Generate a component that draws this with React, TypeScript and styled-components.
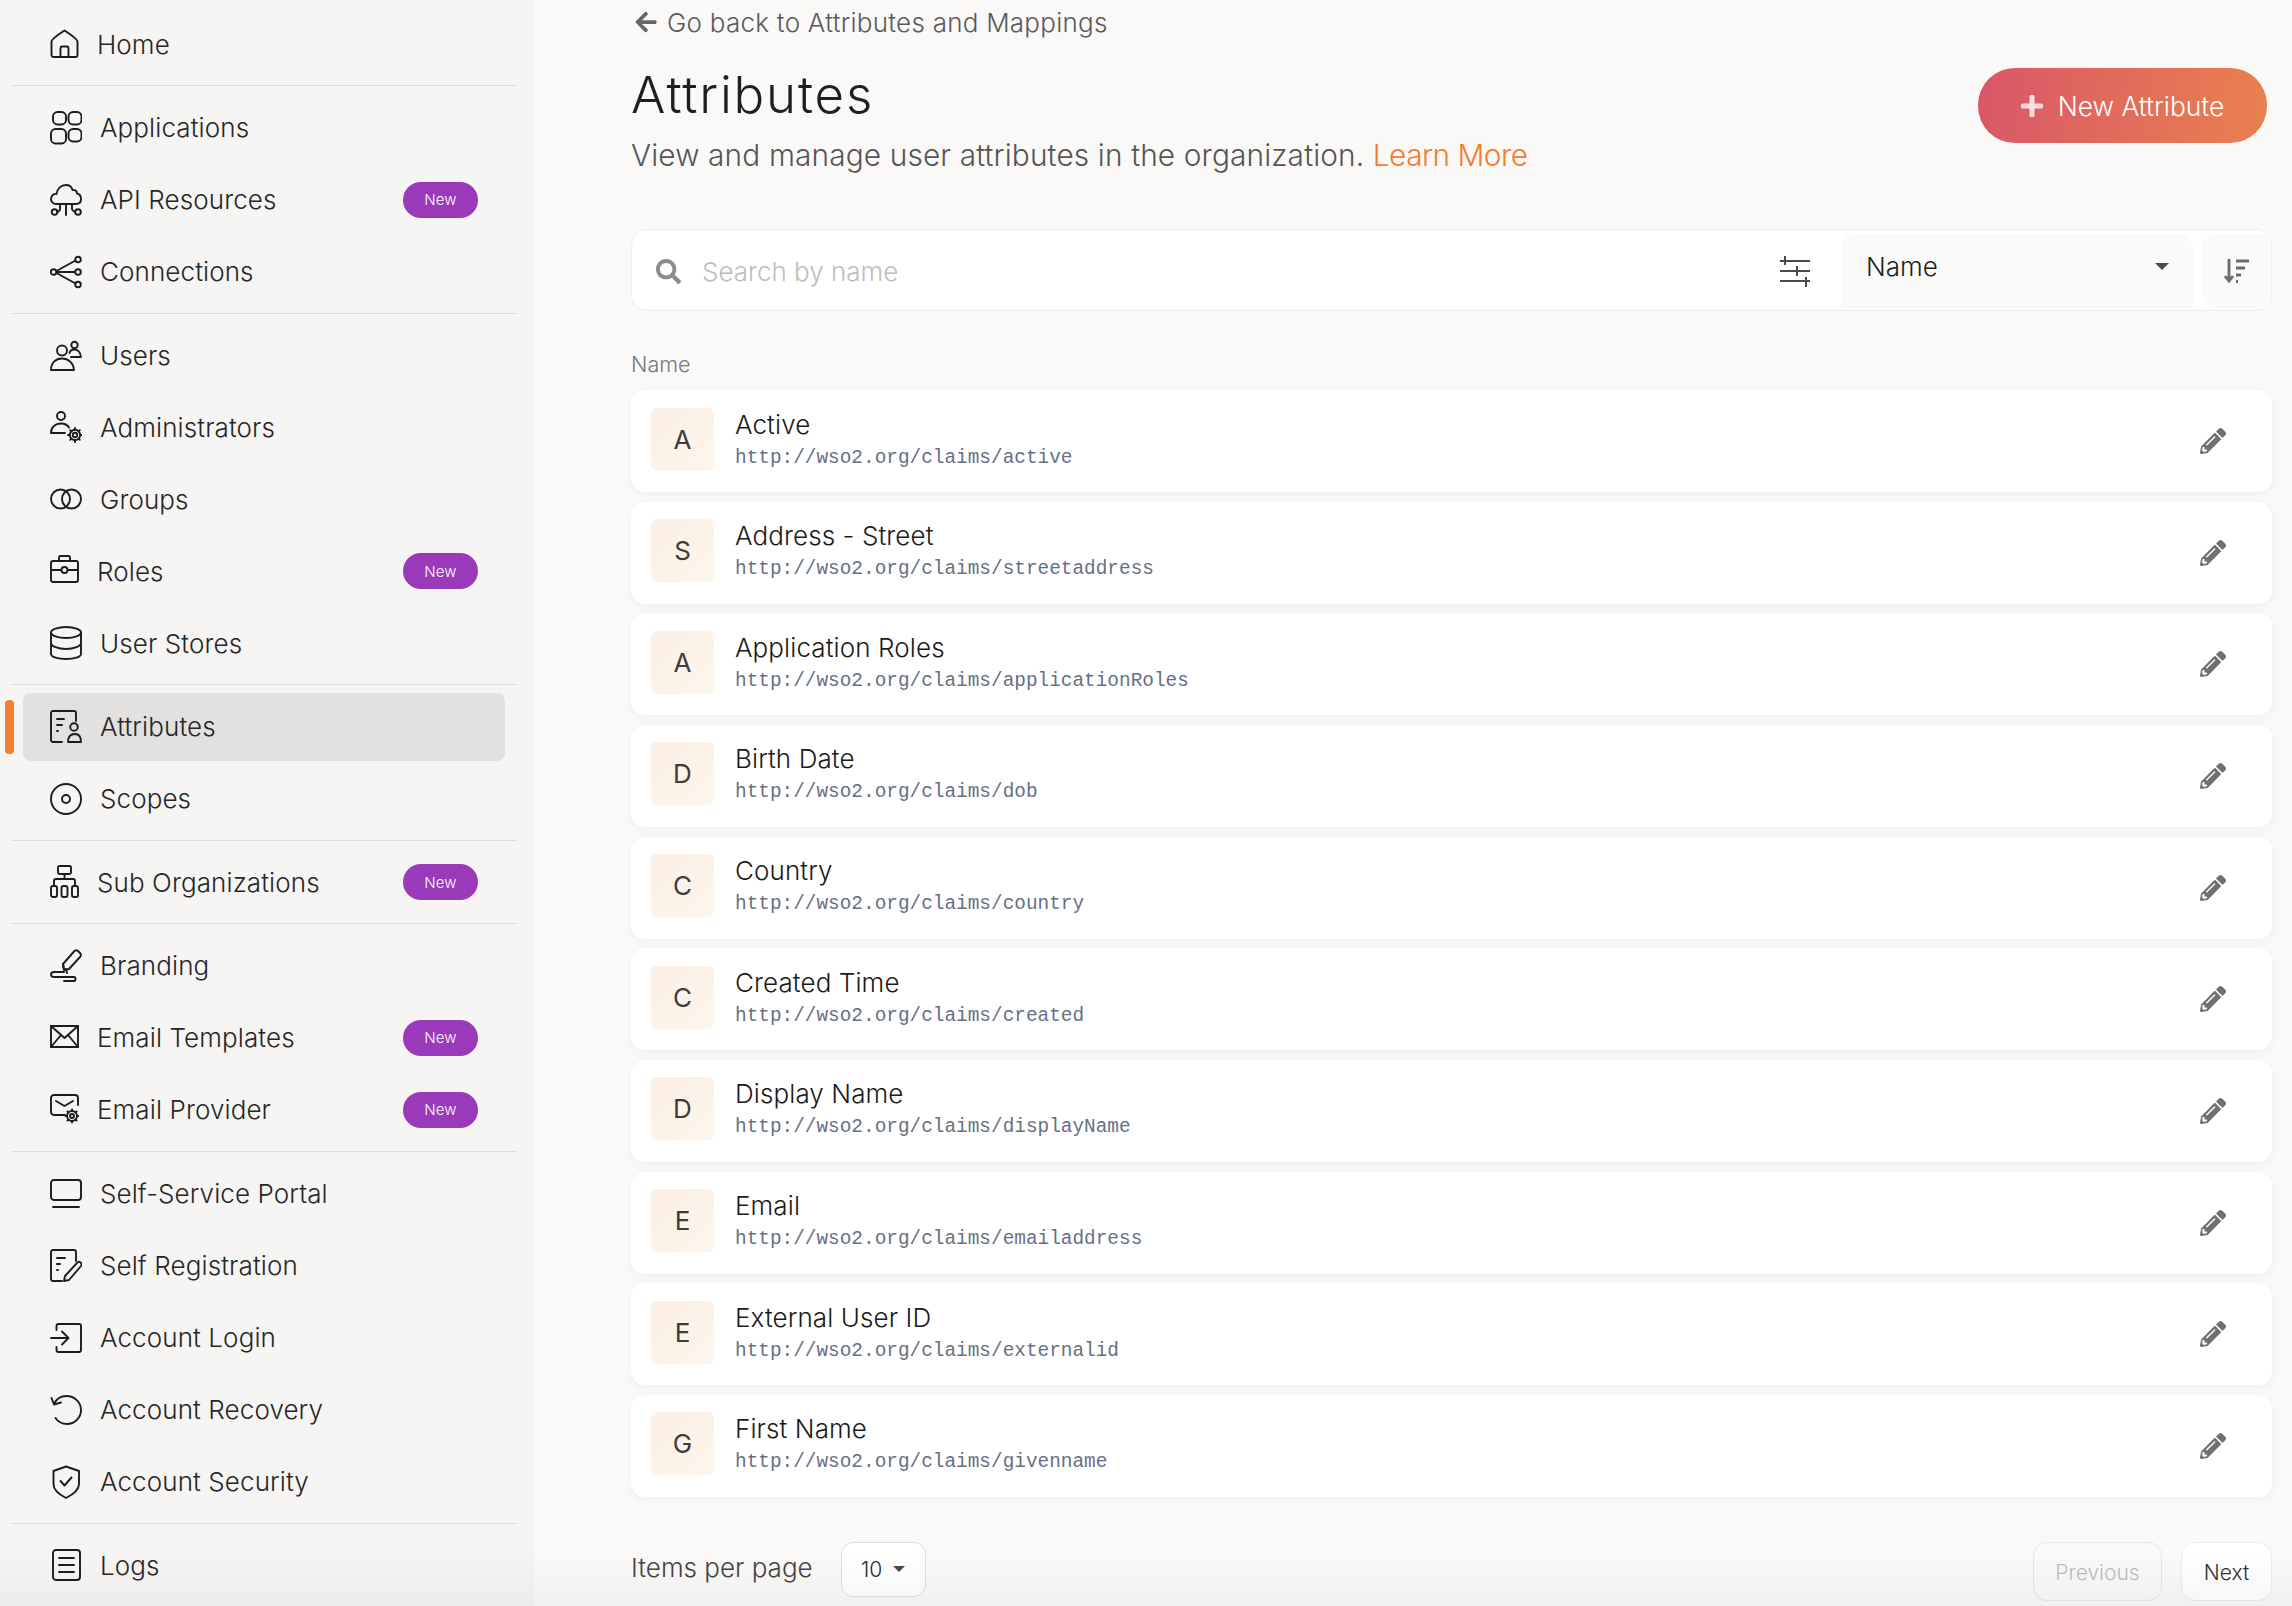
import React from "react";
import styled, { createGlobalStyle } from "styled-components";
import { FaArrowLeft, FaPencilAlt, FaSearch } from "react-icons/fa";

const Global = createGlobalStyle`
  html, body { margin: 0; padding: 0; height: 100%; overflow: hidden; background: #faf9f8; }
  * { box-sizing: border-box; }
  body { font-family: Inter, "Noto Sans", sans-serif; color: #262626; }
`;

const Page = styled.div`
  position: relative;
  display: flex;
  width: 2292px;
  height: 1606px;
  overflow: hidden;
`;

const BottomFade = styled.div`
  position: absolute;
  left: 0;
  right: 0;
  bottom: 0;
  height: 56px;
  pointer-events: none;
  background: linear-gradient(to bottom, rgba(0, 0, 0, 0), rgba(0, 0, 0, 0.035));
`;

const Sidebar = styled.nav`
  flex: 0 0 534px;
  height: 100%;
  background: #f6f5f4;
  padding: 10px 17px 0 12px;
  display: flex;
  flex-direction: column;
`;

const Group = styled.div`
  display: flex;
  flex-direction: column;
  gap: 4px;
`;

const Divider = styled.hr`
  border: 0;
  height: 1px;
  background: #dcdbd9;
  margin: 7px 0 7.6px;
  flex: none;
`;

const Item = styled.a<{ $active?: boolean }>`
  position: relative;
  display: flex;
  align-items: center;
  gap: 18px;
  height: 68px;
  margin: 0 12px 0 11px;
  padding: 0 27px;
  border-radius: 8px;
  background: ${(p) => (p.$active ? "#e2e1df" : "transparent")};
  font-size: 26px;
  font-weight: 300;
  color: #262626;
  letter-spacing: 0.1px;
`;

const ActiveBar = styled.span`
  position: absolute;
  left: -18px;
  top: 7px;
  width: 9px;
  height: 54px;
  border-radius: 4px;
  background: #f27f34;
`;

const IconSvg = styled.svg<{ $w: number }>`
  flex: 0 0 ${(p) => p.$w}px;
  width: ${(p) => p.$w}px;
  height: 34px;
  fill: none;
  stroke: #1c1c1c;
  stroke-width: 1.9;
  stroke-linecap: round;
  stroke-linejoin: round;
`;

const Label = styled.span`
  flex: 1;
  white-space: nowrap;
`;

const Badge = styled.span`
  flex: none;
  width: 75px;
  height: 36px;
  border-radius: 18px;
  background: #9a3aba;
  color: #fff;
  font-size: 15px;
  font-weight: 300;
  display: flex;
  align-items: center;
  justify-content: center;
`;

const Main = styled.main`
  flex: 1;
  min-width: 0;
  background: #faf9f8;
  padding: 7px 20px 0 97px;
  display: flex;
  flex-direction: column;
`;

const BackLink = styled.a`
  display: flex;
  align-items: center;
  gap: 9px;
  height: 30px;
  margin-left: 3px;
  font-size: 26px;
  font-weight: 300;
  letter-spacing: 0.25px;
  color: #5a5a5a;
  svg { color: #666; width: 24px; height: 24px; }
`;

const Header = styled.header`
  display: flex;
  justify-content: space-between;
  align-items: flex-start;
  margin-top: 28px;
  padding-right: 5px;
`;

const Title = styled.h1`
  margin: 0;
  font-size: 51px;
  line-height: 60px;
  font-weight: 300;
  letter-spacing: 1.8px;
  color: #1f1f1f;
`;

const Subtitle = styled.p`
  margin: 10px 0 0;
  font-size: 29.8px;
  line-height: 40px;
  font-weight: 300;
  letter-spacing: 0.14px;
  color: #555;
`;

const LearnMore = styled.a`
  color: #f47b30;
  letter-spacing: -0.5px;
`;

const PrimaryButton = styled.button`
  width: 289px;
  height: 75px;
  margin-top: 3px;
  padding-top: 1px;
  border: 0;
  border-radius: 37px;
  background: linear-gradient(95deg, #d95768 0%, #e9814f 100%);
  color: #fff;
  font-family: inherit;
  font-size: 26.4px;
  font-weight: 300;
  display: flex;
  align-items: center;
  justify-content: center;
  gap: 15px;
`;

const PlusSvg = styled.svg`
  width: 22px;
  height: 22px;
  flex: none;
  fill: #fbdde0;
`;

const SearchBar = styled.div`
  margin-top: 54px;
  height: 82px;
  border: 1px solid #efeeed;
  border-radius: 16px;
  background: #fff;
  padding: 4px 0 2px 24px;
  display: flex;
  align-items: stretch;
  > svg.search { align-self: center; color: #8c8c8c; width: 25px; height: 25px; flex: none; }
`;

const SearchInput = styled.input`
  flex: 1;
  min-width: 0;
  border: 0;
  outline: 0;
  background: transparent;
  margin-left: 21px;
  padding: 0;
  font-family: inherit;
  font-size: 26px;
  font-weight: 300;
  &::placeholder { color: #bdbdbd; opacity: 1; }
`;

const FilterSvg = styled.svg`
  align-self: center;
  flex: none;
  width: 30px;
  height: 32px;
  margin-right: 31px;
  stroke: #4a4a4f;
  stroke-width: 2;
  fill: none;
`;

const SortSelect = styled.div`
  flex: 0 0 352px;
  background: #fafafa;
  border-radius: 14px 14px 0 0;
  padding: 0 24px 10px 25px;
  display: flex;
  align-items: center;
  justify-content: space-between;
  font-size: 26px;
  font-weight: 300;
  color: #1f1f1f;
`;

const Caret = styled.span<{ $size?: number }>`
  width: 0;
  height: 0;
  border-left: ${(p) => p.$size ?? 7}px solid transparent;
  border-right: ${(p) => p.$size ?? 7}px solid transparent;
  border-top: ${(p) => p.$size ?? 7}px solid #4b4b4b;
`;

const OrderButton = styled.div`
  flex: 0 0 69px;
  margin-left: 9px;
  background: #fafafa;
  border-radius: 14px 0 15px 15px;
  display: flex;
  align-items: center;
  justify-content: center;
`;

const OrderSvg = styled.svg`
  width: 26px;
  height: 26px;
  stroke: #6b6b6b;
  fill: none;
  stroke-width: 2.8;
`;

const ListHead = styled.div`
  margin-top: 38px;
  height: 32px;
  padding-bottom: 2px;
  background: #f9f9fa;
  display: flex;
  align-items: center;
  font-size: 21.6px;
  font-weight: 300;
  color: #777;
`;

const List = styled.div`
  margin-top: 9px;
  display: flex;
  flex-direction: column;
  gap: 9.67px;
`;

const Row = styled.div`
  height: 102px;
  border-radius: 14px;
  background: #fff;
  box-shadow: 0 3px 8px rgba(60, 70, 90, 0.05);
  padding: 0 46px 0 20px;
  display: flex;
  align-items: center;
  > svg { color: #707070; width: 26px; height: 26px; flex: none; }
`;

const Avatar = styled.div`
  flex: none;
  width: 63px;
  height: 63px;
  margin-bottom: 4px;
  border-radius: 6px;
  background: linear-gradient(135deg, #fcefe4, #fef5ec);
  color: #3c3c3c;
  font-size: 26px;
  font-weight: 400;
  display: flex;
  align-items: center;
  justify-content: center;
`;

const RowText = styled.div`
  flex: 1;
  margin-left: 21px;
  padding-bottom: 5px;
  display: flex;
  flex-direction: column;
  gap: 4px;
`;

const RowTitle = styled.div`
  font-size: 26px;
  line-height: 34px;
  font-weight: 300;
  letter-spacing: 0.1px;
  color: #1a1a1a;
`;

const RowUrl = styled.code`
  font-family: "Liberation Mono", monospace;
  font-size: 19.4px;
  line-height: 24px;
  color: #667085;
`;

const Footer = styled.footer`
  margin-top: 45px;
  display: flex;
  align-items: flex-start;
`;

const PerPageLabel = styled.span`
  font-size: 26px;
  line-height: 52px;
  font-weight: 300;
  color: #444;
`;

const PerPage = styled.div`
  margin-left: 28px;
  width: 85px;
  height: 55px;
  border: 1px solid #dfdedd;
  border-radius: 12px;
  background: #fff;
  font-size: 21px;
  font-weight: 300;
  display: flex;
  align-items: center;
  justify-content: center;
  gap: 11px;
  color: #2c2c2c;
`;

const Spacer = styled.div`
  flex: 1;
`;

const PageButton = styled.button<{ $disabled?: boolean; $w: number }>`
  width: ${(p) => p.$w}px;
  height: 59px;
  margin-left: 19px;
  padding-top: 4px;
  border: 1px solid ${(p) => (p.$disabled ? "#e7e6e5" : "#ecebea")};
  border-radius: 14px;
  background: ${(p) => (p.$disabled ? "transparent" : "#fff")};
  color: ${(p) => (p.$disabled ? "#bdbdbd" : "#333")};
  font-family: inherit;
  font-size: 21px;
  font-weight: 300;
`;

const p = {
  home: <><path d="M1.5 14.5 C1.5 12 14.5 3.5 14.5 3.5 C14.5 3.5 27.5 12 27.5 14.5 V28 a2 2 0 0 1 -2 2 H3.5 a2 2 0 0 1 -2 -2 Z" /><path d="M10.5 30 V21 a1.5 1.5 0 0 1 1.5 -1.5 h5 a1.5 1.5 0 0 1 1.5 1.5 V30" /></>,
  apps: <><rect x="3" y="1" width="13" height="12.5" rx="4.5" /><rect x="18.5" y="1" width="13" height="12.5" rx="4.5" /><rect x="1" y="18" width="15" height="14.5" rx="4.5" /><rect x="18.5" y="18" width="13" height="12.5" rx="4.5" /></>,
  api: <><path d="M6 21 C2 21 1 17.5 1 16 C1 12.5 4 10.5 6.5 11 C7 6 11 2 16 2 C20 2 22 5 22.5 7 C24 6.5 27 7.5 27 10.5 C29.5 11 31 13.5 31 16 C31 19 29 21 26 21 Z" /><path d="M16 21 V32 M10 21 V26 C10 28 8.5 28.5 7 29 M22 21 V26 C22 27.5 23 28 25 29" /><circle cx="4.5" cy="29" r="2.8" /><circle cx="28" cy="29" r="2.8" /></>,
  conn: <><circle cx="3.6" cy="17" r="2.8" /><circle cx="28" cy="4.5" r="2.8" /><circle cx="28" cy="17" r="2.8" /><circle cx="28" cy="29.5" r="2.8" /><path d="M6.5 16 L25.5 5.5 M6.5 17 H25 M6.5 18 L25.5 28.5" /></>,
  users: <><circle cx="12" cy="12.5" r="5" /><circle cx="24.5" cy="7" r="3.2" /><path d="M1 32 C1 25 5.5 20.5 12 20.5 C18.5 20.5 23.5 25 24 32 Z" /><path d="M19.5 15 C20 12.5 22 11.5 24.5 11.5 C27.5 11.5 30.5 14 31 19 H21" /></>,
  admin: <><circle cx="11" cy="6" r="4" /><path d="M1 23 C1 17.5 5 13.5 11 13.5 C15 13.5 17.5 15 19 17.5 M1 23 H15" /><circle cx="25" cy="25" r="2.2" /><circle cx="25" cy="25" r="5.2" /><path d="M25 18 V20 M25 30 V32 M18 25 H20 M30 25 H32 M20.2 20.2 L21.5 21.5 M28.5 28.5 L29.8 29.8 M29.8 20.2 L28.5 21.5 M21.5 28.5 L20.2 29.8" /></>,
  groups: <><circle cx="10.5" cy="17" r="9.5" /><circle cx="21.5" cy="17" r="9.5" /></>,
  roles: <><rect x="1" y="7" width="27" height="21" rx="2" /><path d="M9 7 V3.5 a1.5 1.5 0 0 1 1.5 -1.5 h8 a1.5 1.5 0 0 1 1.5 1.5 V7 M1 16 H11 M18 16 H28" /><circle cx="14.5" cy="16" r="3" /></>,
  stores: <><ellipse cx="16" cy="6.5" rx="15" ry="5.5" /><path d="M1 6.5 V28 C1 31 8 33 16 33 C24 33 31 31 31 28 V6.5 M1 17 C1 20 8 23 16 23 C24 23 31 20 31 17" /></>,
  attrs: <><path d="M12 32 H3 a2 2 0 0 1 -2 -2 V3 a2 2 0 0 1 2 -2 H24 a2 2 0 0 1 2 2 V11" /><path d="M7 9 H14 M7 15 H12 M7 21 H8" /><circle cx="24" cy="17" r="3.8" /><path d="M18 32 C18 26 21 24 25 24 C29 24 31 27 31 32 H18" /></>,
  scopes: <><circle cx="16" cy="17" r="15" /><circle cx="16" cy="17" r="4" /></>,
  suborg: <><rect x="8" y="1" width="13" height="8" rx="1.5" /><path d="M14.5 9 V14 M4 20 V16 a2 2 0 0 1 2 -2 H23 a2 2 0 0 1 2 2 V20" /><rect x="1" y="21" width="6" height="11" rx="2" /><rect x="11.5" y="21" width="6" height="11" rx="2" /><rect x="22" y="21" width="6" height="11" rx="2" /></>,
  brand: <><path d="M13 15 L24 2.5 a3 3 0 0 1 4 -.5 L30 4 a3 3 0 0 1 0 4 L19 20 L14 21 Z" /><path d="M14 21 L13 15 M16 20 L17 24" /><path d="M14 23 H4 C0 23 0 28 4 28 H24 C26 28 26 32 24 32 H14" /></>,
  email: <><rect x="1" y="5" width="27" height="21" /><path d="M1 5 L14.5 17 L28 5 M1 26 L11 14 M28 26 L18 14" /></>,
  provider: <><path d="M15 22 H4 a3 3 0 0 1 -3 -3 V5 a3 3 0 0 1 3 -3 H25 a3 3 0 0 1 3 3 V12" /><path d="M6 8 L14.5 13 L23 8" /><circle cx="22" cy="23" r="2" /><circle cx="22" cy="23" r="5" /><path d="M22 16.5 V18 M22 28 V29.5 M15.5 23 H17 M27 23 H28.5 M17.4 18.4 L18.5 19.5 M25.5 26.5 L26.6 27.6 M26.6 18.4 L25.5 19.5 M18.5 26.5 L17.4 27.6" /></>,
  portal: <><rect x="1" y="3" width="30" height="20" rx="3" /><path d="M3 30 H29" /></>,
  selfreg: <><path d="M12 32 H3 a2 2 0 0 1 -2 -2 V3 a2 2 0 0 1 2 -2 H24 a2 2 0 0 1 2 2 V12" /><path d="M7 9 H15 M7 15 H10 M7 21 H8" /><path d="M14 32 L15 27 L27 14 a2.5 2.5 0 0 1 4 3 L19 31 Z" /></>,
  login: <><path d="M6.5 9 V5 a2 2 0 0 1 2 -2 H29 a2 2 0 0 1 2 2 V29 a2 2 0 0 1 -2 2 H8.5 a2 2 0 0 1 -2 -2 V26" /><path d="M1 17 H18 M12 10.5 L18.5 17 L12 23.5" /></>,
  recovery: <><path d="M4 11 C6.5 5.5 11 3 16.5 3 C24.5 3 31 9.5 31 17 C31 25 24.5 31 17 31 C11 31 7.5 28 5.5 25" /><path d="M1.5 5 L4 11.5 L11 9.5" /></>,
  security: <><path d="M16 1.5 L29 6 V19 C29 26 22 30 16 33 C10 30 3.5 26 3.5 19 V6 Z" /><path d="M10.5 16 L14.5 20.5 L21.5 12.5" /></>,
  logs: <><rect x="3" y="2" width="27" height="30" rx="3" /><path d="M9 10 H24 M9 17 H24 M9 24 H24" /></>,
};

type IconName = keyof typeof p;

const Icon = ({ name, w }: { name: IconName; w: number }) => (
  <IconSvg $w={w} viewBox={`0 0 ${w} 34`} aria-hidden>
    {p[name]}
  </IconSvg>
);

type NavItem = { label: string; icon: IconName; w?: number; badge?: boolean; active?: boolean };

const nav: NavItem[][] = [
  [{ label: "Home", icon: "home", w: 29 }],
  [
    { label: "Applications", icon: "apps" },
    { label: "API Resources", icon: "api", badge: true },
    { label: "Connections", icon: "conn" },
  ],
  [
    { label: "Users", icon: "users" },
    { label: "Administrators", icon: "admin" },
    { label: "Groups", icon: "groups" },
    { label: "Roles", icon: "roles", w: 29, badge: true },
    { label: "User Stores", icon: "stores" },
  ],
  [
    { label: "Attributes", icon: "attrs", active: true },
    { label: "Scopes", icon: "scopes" },
  ],
  [{ label: "Sub Organizations", icon: "suborg", w: 29, badge: true }],
  [
    { label: "Branding", icon: "brand" },
    { label: "Email Templates", icon: "email", w: 29, badge: true },
    { label: "Email Provider", icon: "provider", w: 29, badge: true },
  ],
  [
    { label: "Self-Service Portal", icon: "portal" },
    { label: "Self Registration", icon: "selfreg" },
    { label: "Account Login", icon: "login" },
    { label: "Account Recovery", icon: "recovery" },
    { label: "Account Security", icon: "security" },
  ],
  [{ label: "Logs", icon: "logs" }],
];

const rows = [
  ["A", "Active", "http://wso2.org/claims/active"],
  ["S", "Address - Street", "http://wso2.org/claims/streetaddress"],
  ["A", "Application Roles", "http://wso2.org/claims/applicationRoles"],
  ["D", "Birth Date", "http://wso2.org/claims/dob"],
  ["C", "Country", "http://wso2.org/claims/country"],
  ["C", "Created Time", "http://wso2.org/claims/created"],
  ["D", "Display Name", "http://wso2.org/claims/displayName"],
  ["E", "Email", "http://wso2.org/claims/emailaddress"],
  ["E", "External User ID", "http://wso2.org/claims/externalid"],
  ["G", "First Name", "http://wso2.org/claims/givenname"],
];

export default function App() {
  return (
    <Page>
      <Global />
      <Sidebar>
        {nav.map((group, i) => (
          <React.Fragment key={i}>
            {i > 0 && <Divider />}
            <Group>
              {group.map((item) => (
                <Item key={item.label} $active={item.active}>
                  {item.active && <ActiveBar />}
                  <Icon name={item.icon} w={item.w ?? 32} />
                  <Label>{item.label}</Label>
                  {item.badge && <Badge>New</Badge>}
                </Item>
              ))}
            </Group>
          </React.Fragment>
        ))}
      </Sidebar>
      <Main>
        <BackLink>
          <FaArrowLeft />
          Go back to Attributes and Mappings
        </BackLink>
        <Header>
          <div>
            <Title>Attributes</Title>
            <Subtitle>
              View and manage user attributes in the organization. <LearnMore>Learn More</LearnMore>
            </Subtitle>
          </div>
          <PrimaryButton>
            <PlusSvg viewBox="0 0 22 22" aria-hidden>
              <path d="M8.5 1.5 a1.5 1.5 0 0 1 1.5 -1.5 h2 a1.5 1.5 0 0 1 1.5 1.5 V8.5 H20.5 a1.5 1.5 0 0 1 1.5 1.5 v2 a1.5 1.5 0 0 1 -1.5 1.5 H13.5 V20.5 a1.5 1.5 0 0 1 -1.5 1.5 h-2 a1.5 1.5 0 0 1 -1.5 -1.5 V13.5 H1.5 a1.5 1.5 0 0 1 -1.5 -1.5 v-2 a1.5 1.5 0 0 1 1.5 -1.5 H8.5 Z" />
            </PlusSvg>
            New Attribute
          </PrimaryButton>
        </Header>
        <SearchBar>
          <FaSearch className="search" />
          <SearchInput placeholder="Search by name" readOnly />
          <FilterSvg viewBox="0 0 30 32" aria-hidden>
            <path d="M0 6 H30 M5 1 V10 M0 16 H30 M17 11 V21 M0 26 H30 M26 22 V32" />
          </FilterSvg>
          <SortSelect>
            Name
            <Caret />
          </SortSelect>
          <OrderButton>
            <OrderSvg viewBox="0 0 26 26" aria-hidden>
              <path d="M5 1 V22 M1 18 L5 23 L9 18" />
              <path d="M12 3 H25 M12 10 H21 M12 17 H17 M12 23.5 H14" />
            </OrderSvg>
          </OrderButton>
        </SearchBar>
        <ListHead>Name</ListHead>
        <List>
          {rows.map(([letter, name, url]) => (
            <Row key={url}>
              <Avatar>{letter}</Avatar>
              <RowText>
                <RowTitle>{name}</RowTitle>
                <RowUrl>{url}</RowUrl>
              </RowText>
              <FaPencilAlt />
            </Row>
          ))}
        </List>
        <Footer>
          <PerPageLabel>Items per page</PerPageLabel>
          <PerPage>
            10
            <Caret $size={6} />
          </PerPage>
          <Spacer />
          <PageButton $disabled $w={129}>Previous</PageButton>
          <PageButton $w={91}>Next</PageButton>
        </Footer>
      </Main>
      <BottomFade />
    </Page>
  );
}
